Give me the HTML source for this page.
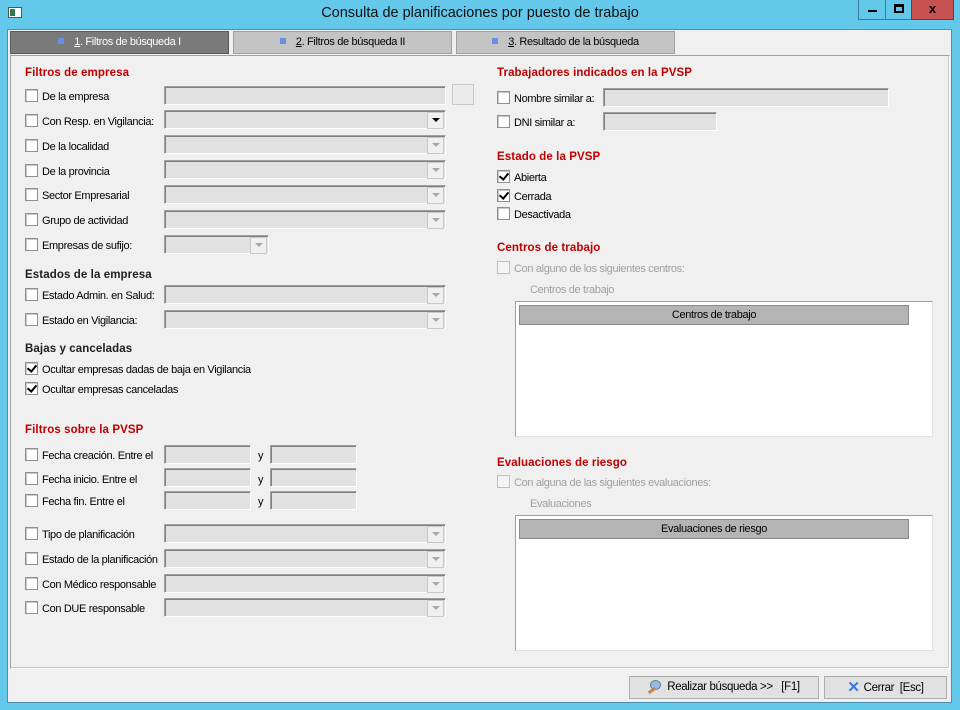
<!DOCTYPE html>
<html><head><meta charset="utf-8"><style>
*{margin:0;padding:0;box-sizing:border-box}
body{width:960px;height:710px;background:#63c8ea;font-family:"Liberation Sans",sans-serif;font-size:11px;letter-spacing:-0.35px;color:#000;position:relative;overflow:hidden}
.a{position:absolute}
#client{left:7px;top:29px;width:945px;height:674px;background:#f0f0f0;border:1px solid #4a90b0}
.t{position:absolute;white-space:nowrap;line-height:14px;margin-top:2px}
.h{position:absolute;white-space:nowrap;font-weight:bold;color:#c00000;font-size:11.5px;letter-spacing:0.1px;line-height:14px}
.hb{position:absolute;white-space:nowrap;font-weight:bold;color:#202020;font-size:11.5px;letter-spacing:0.1px;line-height:14px}
.cb{position:absolute;width:13px;height:13px;background:#fff;border:1px solid #8f8f8f;box-shadow:inset 1px 1px 0 #c8c8c8}
.cb.k::after{content:"";position:absolute;left:3px;top:0px;width:4px;height:7px;border:solid #000;border-width:0 2px 2px 0;transform:rotate(40deg)}
.cb.d{border-color:#c0c0c0;background:#f4f4f4;box-shadow:none}
.in{position:absolute;height:19px;background:#e1e1e1;border:1px solid #a0a0a0;border-right-color:#fff;border-bottom-color:#fff;box-shadow:inset 1px 1px 0 #808080}
.cmb{position:absolute;height:19px;background:#e1e1e1;border:1px solid #a0a0a0;border-right-color:#fff;border-bottom-color:#fff;box-shadow:inset 1px 1px 0 #808080}
.cmb::after{content:"";position:absolute;right:1px;top:1px;width:15px;height:15px;background:#f0f0f0;border:1px solid #c8c8c8}
.cmb::before{content:"";position:absolute;right:5px;top:7px;width:0;height:0;border-left:4px solid transparent;border-right:4px solid transparent;border-top:4px solid #a8a8a8;z-index:2}
.cmb.on::before{border-top-color:#000}
.dis{color:#a0a0a0}
.tab{position:absolute;top:31px;height:23px;width:219px;background:#c4c4c4;border:1px solid #a0a0a0;text-align:center;line-height:21px}
.tab i{display:inline-block;width:6px;height:6px;background:#6a8ee0;margin-right:10px;vertical-align:1px}
.btn{position:absolute;top:676px;height:23px;background:#e1e1e1;border:1px solid #adadad;line-height:21px;text-align:center;font-size:11.5px}
.box{position:absolute;left:515px;width:418px;height:136px;background:#fff;border:1px solid #a0a0a0;border-right-color:#e0e0e0;border-bottom-color:#e0e0e0}
.gh{position:absolute;left:3px;top:3px;width:390px;height:20px;background:#b4b4b4;border:1px solid #8a8a8a;text-align:center;line-height:18px}
</style></head><body>
<div id="client" class="a"></div>
<div class="a" style="left:8px;top:7px;width:14px;height:11px;background:#fff;border:1px solid #555"><div class="a" style="left:1px;top:1px;width:5px;height:7px;background:#2a7a4a"></div></div>
<div class="t" style="left:0;top:4px;margin:0;width:960px;text-align:center;font-size:14.5px;letter-spacing:0;line-height:18px;color:#111">Consulta de planificaciones por puesto de trabajo</div>
<div class="a" style="left:858px;top:0;width:28px;height:20px;background:#63c8ea;border:1px solid #3a7a9a;border-top:none"><div class="a" style="left:9px;top:10px;width:9px;height:2px;background:#000"></div></div>
<div class="a" style="left:885px;top:0;width:27px;height:20px;background:#63c8ea;border:1px solid #3a7a9a;border-top:none"><div class="a" style="left:8px;top:4px;width:10px;height:9px;border:2px solid #000;border-top-width:3px"></div></div>
<div class="a" style="left:911px;top:0;width:43px;height:20px;background:#c75050;border:1px solid #8a3030;border-top:none;color:#000;font-weight:bold;font-size:13px;text-align:center;line-height:18px;letter-spacing:0">x</div>
<div class="tab" style="left:10px;background:#7a7a7a;border-color:#5a5a5a;color:#fff"><i></i><u>1</u>. Filtros de búsqueda I</div>
<div class="tab" style="left:233px"><i></i><u>2</u>. Filtros de búsqueda II</div>
<div class="tab" style="left:456px"><i></i><u>3</u>. Resultado de la búsqueda</div>
<div class="a" style="left:10px;top:55px;width:940px;height:614px;border:1px solid #a0a0a0;border-right-color:#fff;border-bottom-color:#fff;box-shadow:inset -1px -1px 0 #c8c8c8"></div>

<div class="h" style="left:25px;top:66px">Filtros de empresa</div>
<div class="cb" style="left:25px;top:89px"></div><div class="t" style="left:42px;top:88px">De la empresa</div>
<div class="in" style="left:164px;top:86px;width:282px"></div>
<div class="a" style="left:452px;top:84px;width:22px;height:21px;background:#ececec;border:1px solid #c8c8c8"></div>
<div class="cb" style="left:25px;top:114px"></div><div class="t" style="left:42px;top:113px">Con Resp. en Vigilancia:</div>
<div class="cmb on" style="left:164px;top:110px;width:282px"></div>
<div class="cb" style="left:25px;top:139px"></div><div class="t" style="left:42px;top:138px">De la localidad</div>
<div class="cmb" style="left:164px;top:135px;width:282px"></div>
<div class="cb" style="left:25px;top:164px"></div><div class="t" style="left:42px;top:163px">De la provincia</div>
<div class="cmb" style="left:164px;top:160px;width:282px"></div>
<div class="cb" style="left:25px;top:188px"></div><div class="t" style="left:42px;top:187px">Sector Empresarial</div>
<div class="cmb" style="left:164px;top:185px;width:282px"></div>
<div class="cb" style="left:25px;top:213px"></div><div class="t" style="left:42px;top:212px">Grupo de actividad</div>
<div class="cmb" style="left:164px;top:210px;width:282px"></div>
<div class="cb" style="left:25px;top:238px"></div><div class="t" style="left:42px;top:237px">Empresas de sufijo:</div>
<div class="cmb" style="left:164px;top:235px;width:105px"></div>

<div class="hb" style="left:25px;top:268px">Estados de la empresa</div>
<div class="cb" style="left:25px;top:288px"></div><div class="t" style="left:42px;top:287px">Estado Admin. en Salud:</div>
<div class="cmb" style="left:164px;top:285px;width:282px"></div>
<div class="cb" style="left:25px;top:313px"></div><div class="t" style="left:42px;top:312px">Estado en Vigilancia:</div>
<div class="cmb" style="left:164px;top:310px;width:282px"></div>

<div class="hb" style="left:25px;top:342px">Bajas y canceladas</div>
<div class="cb k" style="left:25px;top:362px"></div><div class="t" style="left:42px;top:361px">Ocultar empresas dadas de baja en Vigilancia</div>
<div class="cb k" style="left:25px;top:382px"></div><div class="t" style="left:42px;top:381px">Ocultar empresas canceladas</div>

<div class="h" style="left:25px;top:423px">Filtros sobre la PVSP</div>
<div class="cb" style="left:25px;top:448px"></div><div class="t" style="left:42px;top:447px">Fecha creación. Entre el</div>
<div class="in" style="left:164px;top:445px;width:87px"></div><div class="t" style="left:258px;top:447px">y</div><div class="in" style="left:270px;top:445px;width:87px"></div>
<div class="cb" style="left:25px;top:472px"></div><div class="t" style="left:42px;top:471px">Fecha inicio. Entre el</div>
<div class="in" style="left:164px;top:468px;width:87px"></div><div class="t" style="left:258px;top:471px">y</div><div class="in" style="left:270px;top:468px;width:87px"></div>
<div class="cb" style="left:25px;top:494px"></div><div class="t" style="left:42px;top:493px">Fecha fin. Entre el</div>
<div class="in" style="left:164px;top:491px;width:87px"></div><div class="t" style="left:258px;top:493px">y</div><div class="in" style="left:270px;top:491px;width:87px"></div>

<div class="cb" style="left:25px;top:527px"></div><div class="t" style="left:42px;top:526px">Tipo de planificación</div>
<div class="cmb" style="left:164px;top:524px;width:282px"></div>
<div class="cb" style="left:25px;top:552px"></div><div class="t" style="left:42px;top:551px">Estado de la planificación</div>
<div class="cmb" style="left:164px;top:549px;width:282px"></div>
<div class="cb" style="left:25px;top:577px"></div><div class="t" style="left:42px;top:576px">Con Médico responsable</div>
<div class="cmb" style="left:164px;top:574px;width:282px"></div>
<div class="cb" style="left:25px;top:601px"></div><div class="t" style="left:42px;top:600px">Con DUE responsable</div>
<div class="cmb" style="left:164px;top:598px;width:282px"></div>

<div class="h" style="left:497px;top:66px">Trabajadores indicados en la PVSP</div>
<div class="cb" style="left:497px;top:91px"></div><div class="t" style="left:514px;top:90px">Nombre similar a:</div>
<div class="in" style="left:603px;top:88px;width:286px"></div>
<div class="cb" style="left:497px;top:115px"></div><div class="t" style="left:514px;top:114px">DNI similar a:</div>
<div class="in" style="left:603px;top:112px;width:114px"></div>

<div class="h" style="left:497px;top:150px">Estado de la PVSP</div>
<div class="cb k" style="left:497px;top:170px"></div><div class="t" style="left:514px;top:169px">Abierta</div>
<div class="cb k" style="left:497px;top:189px"></div><div class="t" style="left:514px;top:188px">Cerrada</div>
<div class="cb" style="left:497px;top:207px"></div><div class="t" style="left:514px;top:206px">Desactivada</div>

<div class="h" style="left:497px;top:241px">Centros de trabajo</div>
<div class="cb d" style="left:497px;top:261px"></div><div class="t dis" style="left:514px;top:260px">Con alguno de los siguientes centros:</div>
<div class="t dis" style="left:530px;top:281px">Centros de trabajo</div>
<div class="box" style="top:301px"><div class="gh">Centros de trabajo</div></div>

<div class="h" style="left:497px;top:456px">Evaluaciones de riesgo</div>
<div class="cb d" style="left:497px;top:475px"></div><div class="t dis" style="left:514px;top:474px">Con alguna de las siguientes evaluaciones:</div>
<div class="t dis" style="left:530px;top:495px">Evaluaciones</div>
<div class="box" style="top:515px"><div class="gh">Evaluaciones de riesgo</div></div>

<div class="btn" style="left:629px;width:190px"><span style="display:inline-block;width:16px;height:12px;vertical-align:-2px;margin-right:3px;position:relative"><span class="a" style="left:2px;top:0;width:11px;height:10px;border-radius:50%;background:#9ab8e0;border:1px solid #6a7a9a"></span><span class="a" style="left:0;top:9px;width:8px;height:3px;background:#c08050;transform:rotate(-35deg)"></span></span>Realizar búsqueda &gt;&gt; &nbsp; [F1]</div>
<div class="btn" style="left:824px;width:123px"><span style="color:#3a7ad8;font-weight:bold;font-size:15px;margin-right:4px;vertical-align:-1px">✕</span>Cerrar &nbsp;[Esc]</div>
</body></html>
